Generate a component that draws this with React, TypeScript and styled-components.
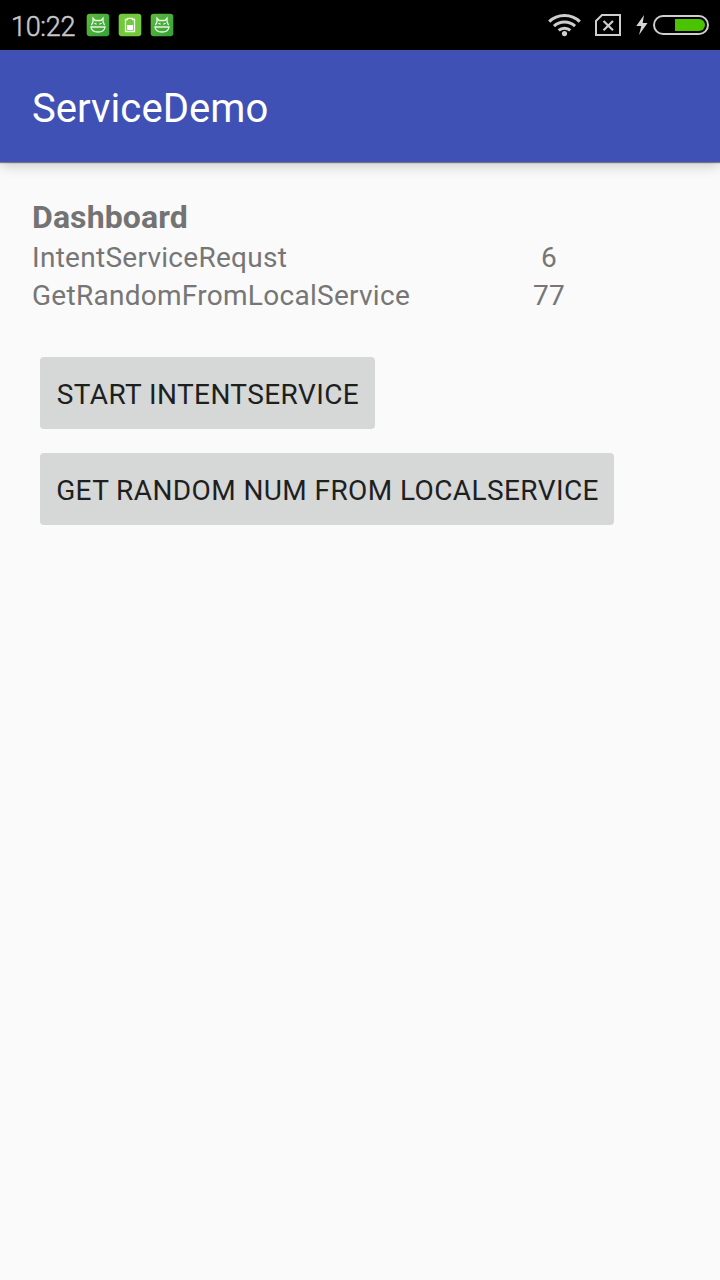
import React from 'react';
import styled, { createGlobalStyle } from 'styled-components';

const Global = createGlobalStyle`
  *, *::before, *::after { box-sizing: border-box; }
  body {
    margin: 0;
    background: #fafafa;
    font-family: Roboto, "Liberation Sans", sans-serif;
  }
`;

const Screen = styled.div`
  display: flex;
  flex-direction: column;
  width: 720px;
  min-height: 1280px;
  background: #fafafa;
`;

const StatusBar = styled.header`
  display: flex;
  align-items: center;
  height: 50px;
  padding: 0 11px 0 11px;
  background: #000;
`;

const Clock = styled.time`
  width: 75px;
  padding-top: 4px;
  color: #c8c8c8;
  font-size: 27px;
  font-weight: 300;
  line-height: 32px;
  letter-spacing: -0.3px;
  -webkit-text-stroke: 0.5px #c8c8c8;
`;

const Notifications = styled.div`
  display: flex;
  gap: 8px;
`;

const StatusIcons = styled.div`
  display: flex;
  align-items: center;
  margin-left: auto;
`;

const Glyph = styled.svg<{ $gap?: number }>`
  display: block;
  flex: none;
  margin-left: ${({ $gap = 0 }) => $gap}px;
`;

const AppBar = styled.div`
  position: relative;
  display: flex;
  align-items: center;
  height: 112px;
  padding: 6px 32px 0;
  background: #3f51b5;
  box-shadow: 0 1px 1px rgba(0, 0, 0, 0.45), 0 4px 12px rgba(0, 0, 0, 0.19);
`;

const Title = styled.h1`
  margin: 0;
  color: #fff;
  font-size: 40px;
  font-weight: 400;
  line-height: 48px;
  letter-spacing: 0.08px;
`;

const Content = styled.main`
  display: flex;
  flex-direction: column;
  align-items: flex-start;
  padding: 36px 32px;
`;

const Heading = styled.h2`
  margin: 0;
  color: #737373;
  font-size: 32px;
  font-weight: 700;
  line-height: 38px;
  letter-spacing: 0.1px;
`;

const Row = styled.div`
  display: grid;
  grid-template-columns: 484px 66px;
  height: 38px;
  padding-top: 3px;
  color: #767676;
  font-size: 28px;
  font-weight: 400;
  line-height: 38px;
  letter-spacing: 0.28px;
`;

const Value = styled.span`
  text-align: center;
`;

const Actions = styled.div`
  display: flex;
  flex-direction: column;
  align-items: flex-start;
  gap: 24px;
  padding: 45px 8px 0;
`;

const Button = styled.button<{ $width: number }>`
  width: ${({ $width }) => $width}px;
  height: 72px;
  padding: 3px 0 0 1px;
  border: 0;
  border-radius: 4px;
  background: #d6d7d7;
  color: #1e1f1f;
  font: 400 28px/34px Roboto, "Liberation Sans", sans-serif;
  letter-spacing: 0.4px;
  text-align: center;
  white-space: nowrap;
`;

const CatIcon = () => (
  <Glyph width="24" height="24" viewBox="0 0 24 24">
    <defs>
      <linearGradient id="leaf" x1="0" y1="0" x2="1" y2="1">
        <stop offset="0" stopColor="#5fb83c" />
        <stop offset="1" stopColor="#32a238" />
      </linearGradient>
    </defs>
    <rect x="0.7" y="0.7" width="22.6" height="22.6" rx="3" fill="url(#leaf)" />
    <path
      d="M5.6 12.3C5.6 10.8 6.8 9.8 7 8.6V5.2L9.2 7.5H14.8L17 5.2V8.6C17.2 9.8 18.4 10.8 18.4 12.3M5 14H19C18.6 17.6 15.8 19 12 19S5.4 17.6 5 14Z"
      fill="none"
      stroke="#e9f8e4"
      strokeWidth="1.35"
    />
    <path d="M8.4 10.2L10.6 11.2M15.6 10.2L13.4 11.2" stroke="#fff" strokeWidth="1.2" />
  </Glyph>
);

const BatteryAppIcon = () => (
  <Glyph width="24" height="24" viewBox="0 0 24 24">
    <rect x="0.7" y="0.7" width="22.6" height="22.6" rx="3" fill="#71ca3c" />
    <path d="M7.5 6.5H9.5V5.3H14.5V6.5H16.5V18.5H7.5Z" fill="none" stroke="#f2fdeb" strokeWidth="1.3" />
    <rect x="9" y="12" width="6" height="5" fill="#fff" />
  </Glyph>
);

const WifiIcon = () => (
  <Glyph width="34" height="26" viewBox="0 0 34 26">
    <g fill="none" stroke="#cecece" strokeWidth="3">
      <path d="M2.2 9.6C10.4 1.4 24.6 1.4 32.8 9.6" />
      <path d="M7 14.2C12.7 8.7 22.3 8.7 28 14.2" />
      <path d="M11.7 18.4C14.8 15.4 20.2 15.4 23.3 18.4" />
    </g>
    <circle cx="17.5" cy="21.6" r="2.6" fill="#cecece" />
  </Glyph>
);

const NoSimIcon = () => (
  <Glyph $gap={14} width="27" height="22" viewBox="0 0 27 22">
    <path d="M7 1H25V21H1V7Z" fill="none" stroke="#cecece" strokeWidth="2" />
    <path d="M8.5 7L18 16.2M18 7L8.5 16.2" stroke="#cecece" strokeWidth="2.2" />
  </Glyph>
);

const BoltIcon = () => (
  <Glyph $gap={14} width="13" height="22" viewBox="0 0 13 22">
    <path d="M8 1L0.3 12H5.3L3 21L11.5 9H6.7Z" fill="#d6d6d6" />
  </Glyph>
);

const BatteryIcon = () => (
  <Glyph $gap={4} width="56" height="20" viewBox="0 0 56 20">
    <rect x="1" y="1" width="54" height="18" rx="9" fill="none" stroke="#d0ccd0" strokeWidth="2" />
    <path d="M22 4H46A6 6 0 0 1 46 16H22Z" fill="#4ac400" />
  </Glyph>
);

export default function App() {
  return (
    <>
      <Global />
      <Screen>
        <StatusBar>
          <Clock>10:22</Clock>
          <Notifications>
            <CatIcon />
            <BatteryAppIcon />
            <CatIcon />
          </Notifications>
          <StatusIcons>
            <WifiIcon />
            <NoSimIcon />
            <BoltIcon />
            <BatteryIcon />
          </StatusIcons>
        </StatusBar>
        <AppBar>
          <Title>ServiceDemo</Title>
        </AppBar>
        <Content>
          <Heading>Dashboard</Heading>
          <Row>
            <span>IntentServiceRequst</span>
            <Value>6</Value>
          </Row>
          <Row>
            <span>GetRandomFromLocalService</span>
            <Value>77</Value>
          </Row>
          <Actions>
            <Button $width={335}>START INTENTSERVICE</Button>
            <Button $width={574}>GET RANDOM NUM FROM LOCALSERVICE</Button>
          </Actions>
        </Content>
      </Screen>
    </>
  );
}
